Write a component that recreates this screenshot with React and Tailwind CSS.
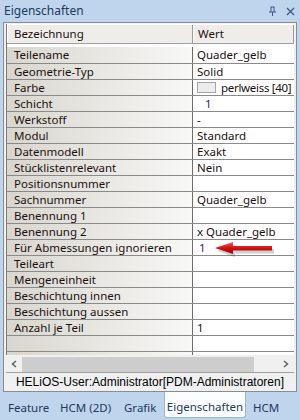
import React from 'react';

const rows = [
  ['Teilename', 'Quader_gelb'],
  ['Geometrie-Typ', 'Solid'],
  ['Farbe', 'farbe'],
  ['Schicht', 'schicht'],
  ['Werkstoff', '-'],
  ['Modul', 'Standard'],
  ['Datenmodell', 'Exakt'],
  ['Stücklistenrelevant', 'Nein'],
  ['Positionsnummer', ''],
  ['Sachnummer', 'Quader_gelb'],
  ['Benennung 1', ''],
  ['Benennung 2', 'x  Quader_gelb'],
  ['Für Abmessungen ignorieren', 'arrow'],
  ['Teileart', ''],
  ['Mengeneinheit', ''],
  ['Beschichtung innen', ''],
  ['Beschichtung aussen', ''],
  ['Anzahl je Teil', '1'],
  ['', ''],
];

const Value = ({ v }) => {
  if (v === 'farbe') {
    return (
      <div className="flex items-center gap-[5px]">
        <span className="w-[19px] h-[11px] bg-[#ececec] border border-[#a5a5a5]" />
        <span className="tracking-[-0.3px]">perlweiss [40]</span>
      </div>
    );
  }
  if (v === 'schicht') return <span className="pl-[8px] text-[#4b1460]">1</span>;
  if (v === 'arrow') {
    return (
      <div className="relative">
        <span className="pl-[2px] text-[#4b1460]">1</span>
        <svg className="absolute left-[14px] top-[-2px]" width="66" height="18" viewBox="0 0 66 18">
          <defs>
            <linearGradient id="ar" x1="0" y1="0" x2="0" y2="1">
              <stop offset="0" stopColor="#f06060" />
              <stop offset="0.5" stopColor="#d21010" />
              <stop offset="1" stopColor="#a00000" />
            </linearGradient>
          </defs>
          <path d="M4 9 L22 3 L22 7 L61 7 L61 11.5 L22 11.5 L22 15 Z" fill="#000" opacity="0.18" transform="translate(2 2)" />
          <path d="M4 8 L22 2 L22 6 L61 6 L61 10.5 L22 10.5 L22 14 Z" fill="url(#ar)" />
        </svg>
      </div>
    );
  }
  return <span>{v}</span>;
};

export default function App() {
  return (
    <div
      className="w-[300px] h-[420px] bg-[#bfd5ee] flex flex-col overflow-hidden"
      style={{ fontFamily: '"Noto Sans", sans-serif' }}
    >
      <div className="h-[22px] shrink-0 flex items-center justify-between pl-[4px] pr-[5px] text-[12px] leading-none text-[#1e395b]">
        <span>Eigenschaften</span>
        <div className="flex items-center gap-[9px]">
          <svg width="9" height="10" viewBox="0 0 9 10">
            <path d="M2.5 1 H6.5 M3 1 V6 M6 1 V6 M1 6 H8 M4.5 6 V10" stroke="#3c5a80" strokeWidth="1" fill="none" />
          </svg>
          <svg width="9" height="9" viewBox="0 0 9 9">
            <path d="M1 1 L8 8 M8 1 L1 8" stroke="#3c5a80" strokeWidth="1.3" />
          </svg>
        </div>
      </div>

      <div className="mx-[3px] h-[370px] shrink-0 border border-[#8b8b8b] bg-[#f0f0f0] flex flex-col">
        <div className="h-[332px] flex flex-col px-[2px] pt-[1px] overflow-hidden">
          <div className="border-l border-[#7a7a7a] flex-1 flex flex-col bg-white text-[11.5px] leading-none text-[#1c1010]">
            <div className="grid grid-cols-[186px_1fr] h-[20px] shrink-0 border-t border-white bg-[#eeede9] border-b border-b-[#a0a0a0]">
              <div className="flex items-center pl-[6px] border-r border-[#9a9a9a] border-l border-l-white">Bezeichnung</div>
              <div className="flex items-center pl-[4px] border-l border-white border-r border-r-[#9a9a9a]">Wert</div>
            </div>
            {rows.map(([k, v], i) => (
              <div
                key={i}
                className={`grid grid-cols-[186px_1fr] shrink-0 ${i === 0 ? 'h-[20px] pt-[3px]' : 'h-[16px]'} border-b border-[#8a8a8a]`}
              >
                <div className="flex items-center pl-[7px] border-r border-[#6e6e6e] bg-gradient-to-r from-[#d9d6cf] to-[#f8f8f6] whitespace-nowrap">
                  {k}
                </div>
                <div className="flex items-center pl-[4px] whitespace-nowrap">
                  <Value v={v} />
                </div>
              </div>
            ))}
            <div className="flex-1 grid grid-cols-[186px_1fr]">
              <div className="border-r border-[#6e6e6e] bg-gradient-to-r from-[#d9d6cf] to-[#f8f8f6]" />
              <div />
            </div>
          </div>
        </div>
        <div className="h-[17px] shrink-0 mx-[2px] pt-[1px] flex items-center bg-[#f0f0f0]">
          <div className="w-[16px] flex justify-center">
            <svg width="6" height="8" viewBox="0 0 6 8">
              <path d="M5 1 L1.5 4 L5 7" stroke="#606060" strokeWidth="1.5" fill="none" />
            </svg>
          </div>
          <div className="w-[232px] h-[15px] bg-[#cdcdcd]" />
          <div className="flex-1" />
          <div className="w-[16px] flex justify-center">
            <svg width="6" height="8" viewBox="0 0 6 8">
              <path d="M1 1 L4.5 4 L1 7" stroke="#606060" strokeWidth="1.5" fill="none" />
            </svg>
          </div>
        </div>
        <div
          className="flex-1 mx-[2px] mb-[1px] border-t border-[#a0a0a0] flex items-center justify-center text-[12px] leading-none text-black"
          style={{ fontFamily: '"Liberation Sans", Arial, sans-serif' }}
        >
          HELiOS-User:Administrator[PDM-Administratoren]
        </div>
      </div>

      <div className="flex-1 flex items-start pl-[8px] text-[11.5px] leading-none text-[#1e395b] whitespace-nowrap">
        <span className="w-[52px] pt-[10px]">Feature</span>
        <span className="w-[64px] pt-[10px]">HCM (2D)</span>
        <span className="w-[40px] pt-[10px]">Grafik</span>
        <span className="w-[82px] flex justify-center pt-[9px] pb-[4px] bg-[#fbfdff] border border-t-0 border-[#9ab4d4] rounded-b-[3px]">Eigenschaften</span>
        <span className="pl-[7px] pt-[10px]">HCM</span>
      </div>
    </div>
  );
}
